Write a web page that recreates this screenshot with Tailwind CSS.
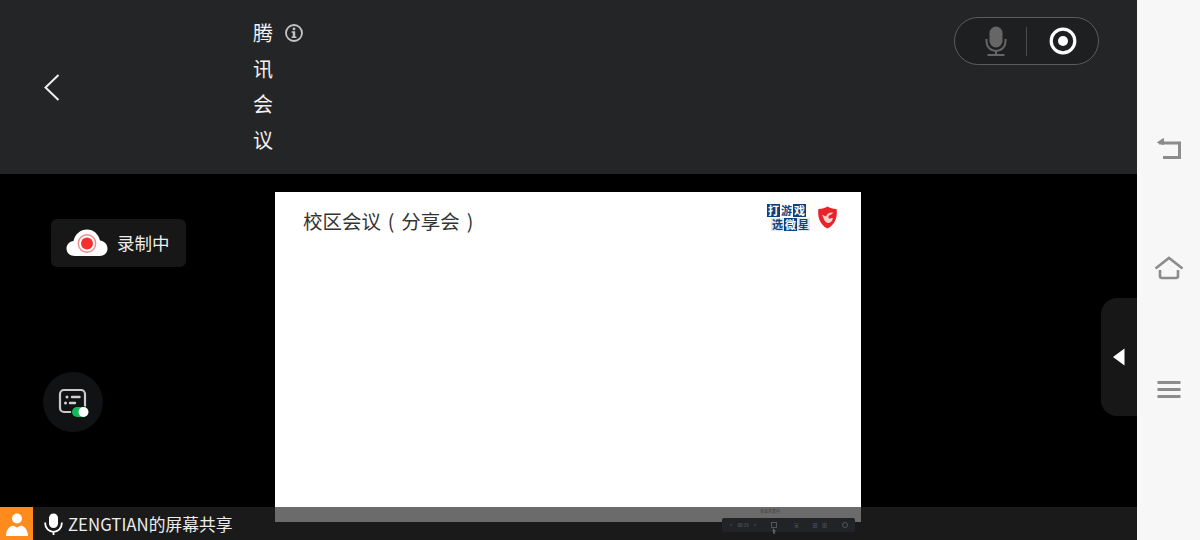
<!DOCTYPE html>
<html lang="zh-CN">
<head>
  <meta charset="UTF-8" />
  <title>腾讯会议</title>
  <script src="https://cdn.jsdelivr.net/npm/@tailwindcss/browser@4"></script>
</head>
<body class="w-[1200px] h-[540px] overflow-hidden bg-black font-['Noto_Sans_CJK_SC','Noto_Sans',sans-serif]">
  <div class="flex h-[540px]">

    <!-- meeting area -->
    <div class="w-[1137px] flex flex-col">

      <!-- top bar -->
      <header class="h-[174px] bg-[#242527] flex items-start text-white">
        <button class="w-[253px] h-[174px] pl-[44px] flex items-center">
          <svg width="16" height="27" viewBox="0 0 16 27" fill="none" stroke="#eeeeee" stroke-width="2">
            <path d="M14.5 1 L1.5 13.5 L14.5 26" />
          </svg>
        </button>
        <div class="w-[20px] mt-[15px] text-[20px] leading-[35.7px] text-[#f2f2f2]">腾讯会议</div>
        <svg class="ml-[12px] mt-[24px]" width="18" height="18" viewBox="0 0 18 18" fill="none">
          <circle cx="9" cy="9" r="8" stroke="#c4c4c4" stroke-width="1.8" />
          <circle cx="9" cy="4.9" r="1.4" fill="#c4c4c4" />
          <path d="M6.6 7.3 H10.2 V12.6 H11.4 V14 H6.6 V12.6 H7.8 V8.7 H6.6 Z" fill="#c4c4c4" />
        </svg>
        <div class="ml-auto mr-[38px] mt-[17px] w-[145px] h-[48px] rounded-full border border-[#5a5b5e] bg-[#1e1f21] flex items-center">
          <div class="w-[71px] pl-[30px]">
            <svg width="22" height="30" viewBox="0 0 22 30" fill="none">
              <rect x="4.5" y="0.5" width="13" height="21" rx="6.5" fill="#666" />
              <path d="M1.5 13 V15.5 A9.5 9.5 0 0 0 20.5 15.5 V13" stroke="#666" stroke-width="2" />
              <path d="M11 25 V28.5 M2.5 29 H19.5" stroke="#666" stroke-width="2" />
            </svg>
          </div>
          <div class="w-px h-[29px] bg-[#4b4c4f]"></div>
          <div class="flex-1 flex justify-center">
            <svg width="28" height="28" viewBox="0 0 28 28" fill="none">
              <circle cx="14" cy="14" r="11.8" stroke="#fff" stroke-width="3.2" />
              <circle cx="14" cy="14" r="5" fill="#fff" />
            </svg>
          </div>
        </div>
      </header>

      <!-- stage -->
      <main class="relative flex-1 bg-black">
        <!-- bottom name bar -->
        <div class="absolute left-0 bottom-0 w-full h-[33px] bg-[#1a1a1a] flex items-center">
          <div class="w-[33px] h-[33px] bg-[#ff8a1e] flex items-center justify-center">
            <svg width="24" height="26" viewBox="0 0 24 26">
              <circle cx="12" cy="7.5" r="5" fill="#fff" />
              <path d="M1 25 C1 19.5 4 15.5 8 14.5 L12 16.5 L16 14.5 C20 15.5 23 19.5 23 25 Z" fill="#fff" />
            </svg>
          </div>
          <svg class="ml-[11px]" width="19" height="22" viewBox="0 0 19 22" fill="none">
            <rect x="5" y="0.5" width="9" height="14.5" rx="4.5" fill="#fff" />
            <path d="M1.2 9.5 V10.5 A8.3 8.3 0 0 0 17.8 10.5 V9.5" stroke="#fff" stroke-width="1.8" />
            <path d="M9.5 19 V22" stroke="#fff" stroke-width="1.8" />
          </svg>
          <span class="ml-[5px] text-[16.8px] leading-[24px] text-[#ececec] whitespace-nowrap">ZENGTIAN的屏幕共享</span>
        </div>

        <!-- shared slide -->
        <div class="absolute left-[275px] top-[18px] w-[586px] h-[330px] flex flex-col">
          <div class="relative flex-1 bg-white pl-[28px] pt-[14px]">
            <p class="text-[19.5px] leading-[30px] text-[#333] whitespace-nowrap [word-spacing:2.5px]">校区会议 ( 分享会 )</p>
            <div class="absolute left-[492px] top-[12px] flex flex-col items-start text-[11px] leading-[13px] font-bold text-center">
              <div class="flex w-[39px]">
                <span class="w-[13px] bg-[#123f78] text-white">打</span>
                <span class="w-[13px] bg-white text-[#123f78]">游</span>
                <span class="w-[13px] bg-[#123f78] text-white">戏</span>
              </div>
              <div class="flex w-[39px] ml-[4px] mt-px">
                <span class="w-[13px] bg-[#dfe8f1] text-[#123f78]">选</span>
                <span class="w-[13px] bg-[#123f78] text-white">微</span>
                <span class="w-[13px] bg-[#dfe8f1] text-[#123f78]">星</span>
              </div>
            </div>
            <svg class="absolute left-[542px] top-[14px]" width="21" height="23" viewBox="0 0 21 24">
              <path d="M1 3 C5 3 8 2 10.5 0.5 C13 2 16 3 20 3 C21 11 19 19 10.5 23.5 C2 19 0 11 1 3 Z" fill="#e8232a" />
              <path d="M5 9 L9 11 C10 8 13 6.5 16.5 7 L14 9 C12.5 9 11.5 10 11.5 11.5 C11.5 13 13 14 14.5 13.5 L12.5 12.5 H16 C16 16 13 18.5 10 17.5 C7.5 16.5 6.5 13 5 9 Z" fill="#f8d0d0" />
            </svg>
          </div>
          <div class="h-[15px] bg-[#6b6b6b] flex justify-center">
            <span class="ml-[404px] text-[4px] leading-[9px] text-[#333]">会议共享中</span>
          </div>
        </div>

        <!-- recording badge -->
        <div class="absolute left-[51px] top-[45px] w-[135px] h-[48px] rounded-[6px] bg-[#171717] flex items-center pl-[15px] gap-[9px]">
          <svg width="42" height="30" viewBox="0 0 42 30">
            <path d="M9 28 C3.5 28 0.5 24.5 0.5 20.5 C0.5 16.5 3.5 13.5 7.5 13 C9 6 14.5 1.5 21 1.5 C27.5 1.5 32.5 6 34 12.5 C38.5 13 41.5 16.5 41.5 20.5 C41.5 24.5 38.5 28 33.5 28 Z" fill="#fff" />
            <circle cx="21" cy="15.5" r="8.7" fill="none" stroke="#f08a8a" stroke-width="1.4" />
            <circle cx="21" cy="15.5" r="6" fill="#f5302f" />
          </svg>
          <span class="text-[17.5px] leading-[24px] text-[#ececec]">录制中</span>
        </div>

        <!-- captions toggle -->
        <button class="absolute left-[43px] top-[198px] w-[60px] h-[60px] rounded-full bg-[#101214] flex items-center justify-center">
          <svg width="32" height="32" viewBox="0 0 32 32" fill="none">
            <rect x="3" y="4" width="25" height="22" rx="4" stroke="#c9c9c9" stroke-width="2.2" />
            <circle cx="10" cy="11" r="1.5" fill="#d0d0d0" />
            <path d="M15 11 H22.5" stroke="#d0d0d0" stroke-width="2.4" stroke-linecap="round" />
            <circle cx="8.5" cy="17" r="1.5" fill="#d0d0d0" />
            <path d="M13 17 H18" stroke="#d0d0d0" stroke-width="2.4" stroke-linecap="round" />
            <rect x="14" y="20" width="18" height="12" rx="6" fill="#101214" />
            <rect x="15" y="21" width="16" height="10" rx="5" fill="#12b85a" />
            <circle cx="26.5" cy="26" r="5" fill="#fff" />
          </svg>
        </button>

        <!-- shared screen's own toolbar -->
        <div class="absolute left-[722px] top-[344px] w-[133px] h-[14px] bg-[#222326] rounded-[2px] flex items-center text-[4.5px] text-[#666] pl-[8px] gap-[5px]">
          <span>&lt;</span><span>00:15</span><span>&gt;</span>
          <span class="ml-[10px] w-[6px] h-[6px] border border-[#555]"></span>
          <span class="ml-[12px]">▣</span>
          <span class="ml-[9px]">田</span>
          <span>田</span>
          <span class="ml-[10px] w-[6px] h-[6px] rounded-full border border-[#555]"></span>
        </div>
        <svg class="absolute left-[772px] top-[354px]" width="5" height="6" viewBox="0 0 6 7"><path d="M1 0 L5 4 H3 L3.5 7 H2 L1 4.5 Z" fill="#666" /></svg>

        <!-- side drawer handle -->
        <button class="absolute right-0 top-[124px] w-[36px] h-[118px] rounded-l-[16px] bg-[#171717] flex items-center pl-[11px]">
          <svg width="13" height="18" viewBox="0 0 13 18"><path d="M12.5 0.5 V17.5 L1 9 Z" fill="#fff" /></svg>
        </button>
      </main>
    </div>

    <!-- android nav buttons -->
    <nav class="w-[63px] bg-[#f7f7f7] flex flex-col items-center pt-[137px]">
      <svg width="26" height="24" viewBox="0 0 26 24" fill="none" stroke="#8c8c8c" stroke-width="3">
        <path d="M3 6 H23.5 V20.5 H7" />
        <path d="M7.5 1.5 L1.5 5.5 L7.5 7.5 Z" fill="#8c8c8c" stroke-width="1" />
      </svg>
      <svg class="mt-[95px]" width="30" height="24" viewBox="0 0 30 24" fill="none" stroke="#8c8c8c" stroke-width="2.6">
        <path d="M1.5 12.5 L15 2 L28.5 12.5" />
        <path d="M6 14 V20 Q6 22 8 22 H22 Q24 22 24 20 V14" />
      </svg>
      <svg class="mt-[100px]" width="24" height="20" viewBox="0 0 24 20" fill="#8c8c8c">
        <rect x="0.5" y="1" width="23" height="3" />
        <rect x="0.5" y="8" width="23" height="3" />
        <rect x="0.5" y="15" width="23" height="3" />
      </svg>
    </nav>
  </div>
</body>
</html>
